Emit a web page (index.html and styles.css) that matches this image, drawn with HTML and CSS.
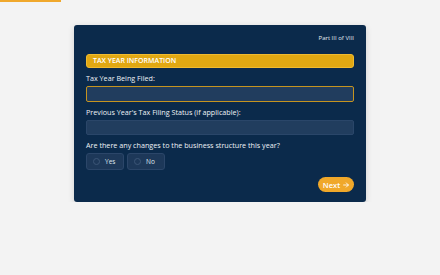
FILE: index.html
```html
<!DOCTYPE html>
<html lang="en">
  <head>
    <meta charset="UTF-8" />
    <meta name="viewport" content="width=device-width, initial-scale=1.0" />
    <title>Tax Questionnaire</title>
    <link rel="stylesheet" href="styles.css">
  </head>
  <body>
    <div class="progress"><div class="progress__bar"></div></div>
    <main class="container">
      <form class="card">
        <p class="card__part">Part III of VIII</p>
        <h2 class="section">TAX YEAR INFORMATION</h2>
        <label class="label" for="year">Tax Year Being Filed:</label>
        <input class="field field--active" id="year" type="text" />
        <label class="label" for="status">Previous Year's Tax Filing Status (if applicable):</label>
        <input class="field field--short" id="status" type="text" />
        <p class="label">Are there any changes to the business structure this year?</p>
        <div class="options">
          <label class="option"><span class="option__dot"></span>Yes</label>
          <label class="option"><span class="option__dot"></span>No</label>
        </div>
        <div class="actions">
          <button type="button" class="next">Next
            <svg class="next__arrow" viewBox="0 0 10 10" width="6" height="6">
              <path d="M1 5h8M5.5 1.5L9 5 5.5 8.5" fill="none" stroke="#fff" stroke-width="1.4" stroke-linecap="round" stroke-linejoin="round"/>
            </svg>
          </button>
        </div>
      </form>
    </main>
  </body>
</html>
```

FILE: styles.css
```css
* {
  font-family: "Open Sans", sans-serif;
  margin: 0;
  padding: 0;
  box-sizing: border-box;
}
body {
  background-color: #f3f3f3;
}
.progress {
  height: 2px;
}
.progress__bar {
  width: 61px;
  height: 2px;
  background-color: #f0a82c;
}
.container {
  width: 292px;
  margin: 23px auto 0;
}
.card {
  background-color: #0b2a4b;
  border-radius: 3px;
  padding: 9px 12px 10px;
  display: flex;
  flex-direction: column;
  box-shadow: 0 2px 6px rgba(0, 0, 0, 0.15);
}
.card__part {
  text-align: right;
  color: #e6ebf1;
  font-size: 6px;
  line-height: 8px;
  margin-bottom: 12px;
  -webkit-font-smoothing: antialiased;
}
.section {
  background-color: #e1a812;
  border: 1px solid #f0bb30;
  border-radius: 3px;
  color: #fff;
  font-size: 7px;
  font-weight: 600;
  height: 14px;
  line-height: 12px;
  padding: 0 6px;
  margin-bottom: 5px;
}
.label {
  color: #eef2f6;
  font-size: 7.2px;
  font-weight: 500;
  line-height: 10px;
  margin-bottom: 3px;
}
.field {
  display: block;
  width: 100%;
  height: 16px;
  background-color: #213d5e;
  border: 1px solid #2a4669;
  border-radius: 2px;
  outline: none;
  margin-bottom: 5px;
}
.field--active {
  border: 1.5px solid #c59420;
}
.field--short {
  height: 15px;
}
.options {
  display: flex;
  gap: 3px;
}
.option {
  display: flex;
  align-items: center;
  gap: 5px;
  width: 38px;
  height: 17px;
  padding: 0 6px;
  background-color: #1d3859;
  border: 1px solid #2b4669;
  border-radius: 3px;
  color: #dfe6ee;
  font-size: 6.5px;
}
.option__dot {
  width: 7px;
  height: 7px;
  border: 1px solid #3c5677;
  border-radius: 50%;
}
.actions {
  display: flex;
  justify-content: flex-end;
  margin-top: 7px;
}
.next {
  display: flex;
  align-items: center;
  justify-content: center;
  gap: 3px;
  background-color: #f0a82a;
  color: #fff;
  border: none;
  border-radius: 8px;
  font-size: 7.5px;
  font-weight: 600;
  width: 36px;
  height: 15px;
}
```
